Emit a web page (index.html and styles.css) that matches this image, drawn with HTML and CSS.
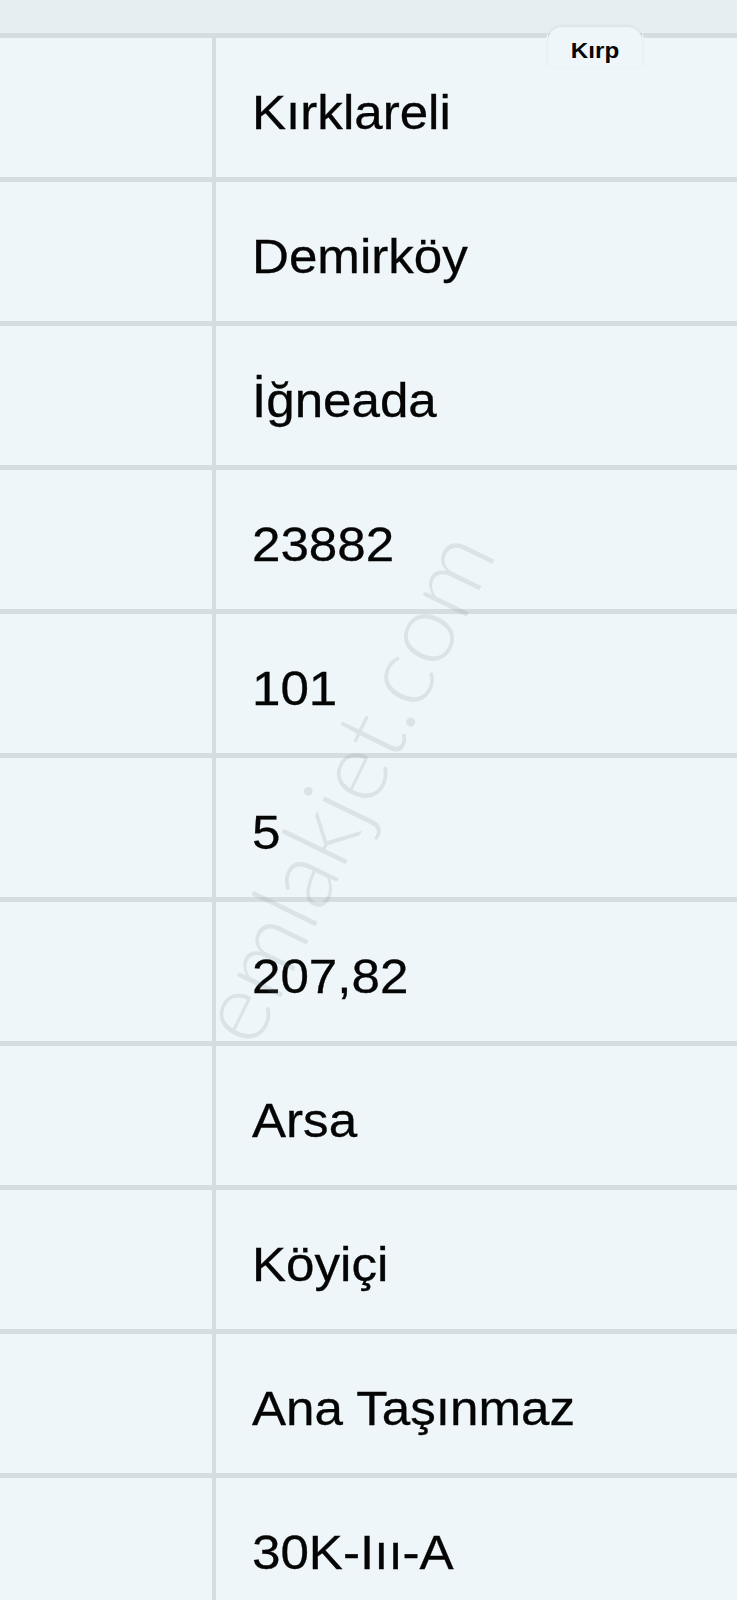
FILE: index.html
```html
<!DOCTYPE html>
<html lang="tr">
<head>
<meta charset="utf-8">
<title>Tapu bilgileri</title>
<link rel="stylesheet" href="styles.css">
</head>
<body>
<div class="page">
  <div class="topbar"></div>
  <div class="table">
    <div class="row"><div class="label"></div><div class="value"><span>Kırklareli</span></div></div>
    <div class="row"><div class="label"></div><div class="value"><span>Demirköy</span></div></div>
    <div class="row"><div class="label"></div><div class="value"><span>İğneada</span></div></div>
    <div class="row"><div class="label"></div><div class="value"><span>23882</span></div></div>
    <div class="row"><div class="label"></div><div class="value"><span>101</span></div></div>
    <div class="row"><div class="label"></div><div class="value"><span>5</span></div></div>
    <div class="row"><div class="label"></div><div class="value"><span>207,82</span></div></div>
    <div class="row"><div class="label"></div><div class="value"><span>Arsa</span></div></div>
    <div class="row"><div class="label"></div><div class="value"><span>Köyiçi</span></div></div>
    <div class="row"><div class="label"></div><div class="value"><span>Ana Taşınmaz</span></div></div>
    <div class="row"><div class="label"></div><div class="value"><span>30K-Iıı-A</span></div></div>
  </div>
  <div class="badge"><span>Kırp</span></div>
  <div class="watermark">emlakjet.com</div>
</div>
</body>
</html>
```
FILE: styles.css
```css
html, body {
  margin: 0;
  padding: 0;
  background: #eef6f9;
}

.page {
  position: relative;
  width: 737px;
  height: 1600px;
  overflow: hidden;
  background: #eef6f9;
  font-family: "Liberation Sans", Arial, sans-serif;
  color: #050505;
}

.topbar {
  height: 33px;
  background: #e7eef1;
}

.table {
  display: flex;
  flex-direction: column;
}

.row {
  box-sizing: border-box;
  height: 144px;
  flex: none;
  display: grid;
  grid-template-columns: 216px 1fr;
  border-top: 5px solid #d6dde0;
}

.label {
  border-right: 4px solid #d6dde0;
  background: #eef6f9;
}

.value {
  display: flex;
  align-items: center;
  padding-left: 36px;
  padding-top: 10px;
  background: #eef6f9;
}

.value span {
  display: inline-block;
  font-size: 48px;
  white-space: nowrap;
  transform: scaleX(1.065);
  transform-origin: left center;
  -webkit-text-stroke: 0.3px #050505;
}

.badge {
  position: absolute;
  left: 548px;
  top: 27px;
  width: 94px;
  height: 40px;
  box-sizing: border-box;
  padding-top: 11px;
  border-radius: 14px 14px 0 0;
  background: #eef6f9;
  box-shadow: 0 -1px 3px rgba(160, 175, 180, 0.25);
  text-align: center;
}

.badge::before,
.badge::after {
  content: "";
  position: absolute;
  top: 6px;
  width: 8px;
  height: 5px;
}

.badge::before {
  left: -8px;
  background: radial-gradient(circle at 0 0, transparent 7px, #eef6f9 8px);
}

.badge::after {
  right: -8px;
  background: radial-gradient(circle at 100% 0, transparent 7px, #eef6f9 8px);
}

.badge span {
  display: inline-block;
  font-size: 22px;
  line-height: 25px;
  font-weight: bold;
  transform: scaleX(1.1);
}

.watermark {
  position: absolute;
  left: 342px;
  top: 785px;
  transform: translate(-50%, -50%) rotate(-64deg);
  font-family: "Lato", "Open Sans", sans-serif;
  font-weight: 300;
  font-size: 98px;
  line-height: 1;
  white-space: nowrap;
  color: rgba(110, 125, 130, 0.15);
  pointer-events: none;
}
```
